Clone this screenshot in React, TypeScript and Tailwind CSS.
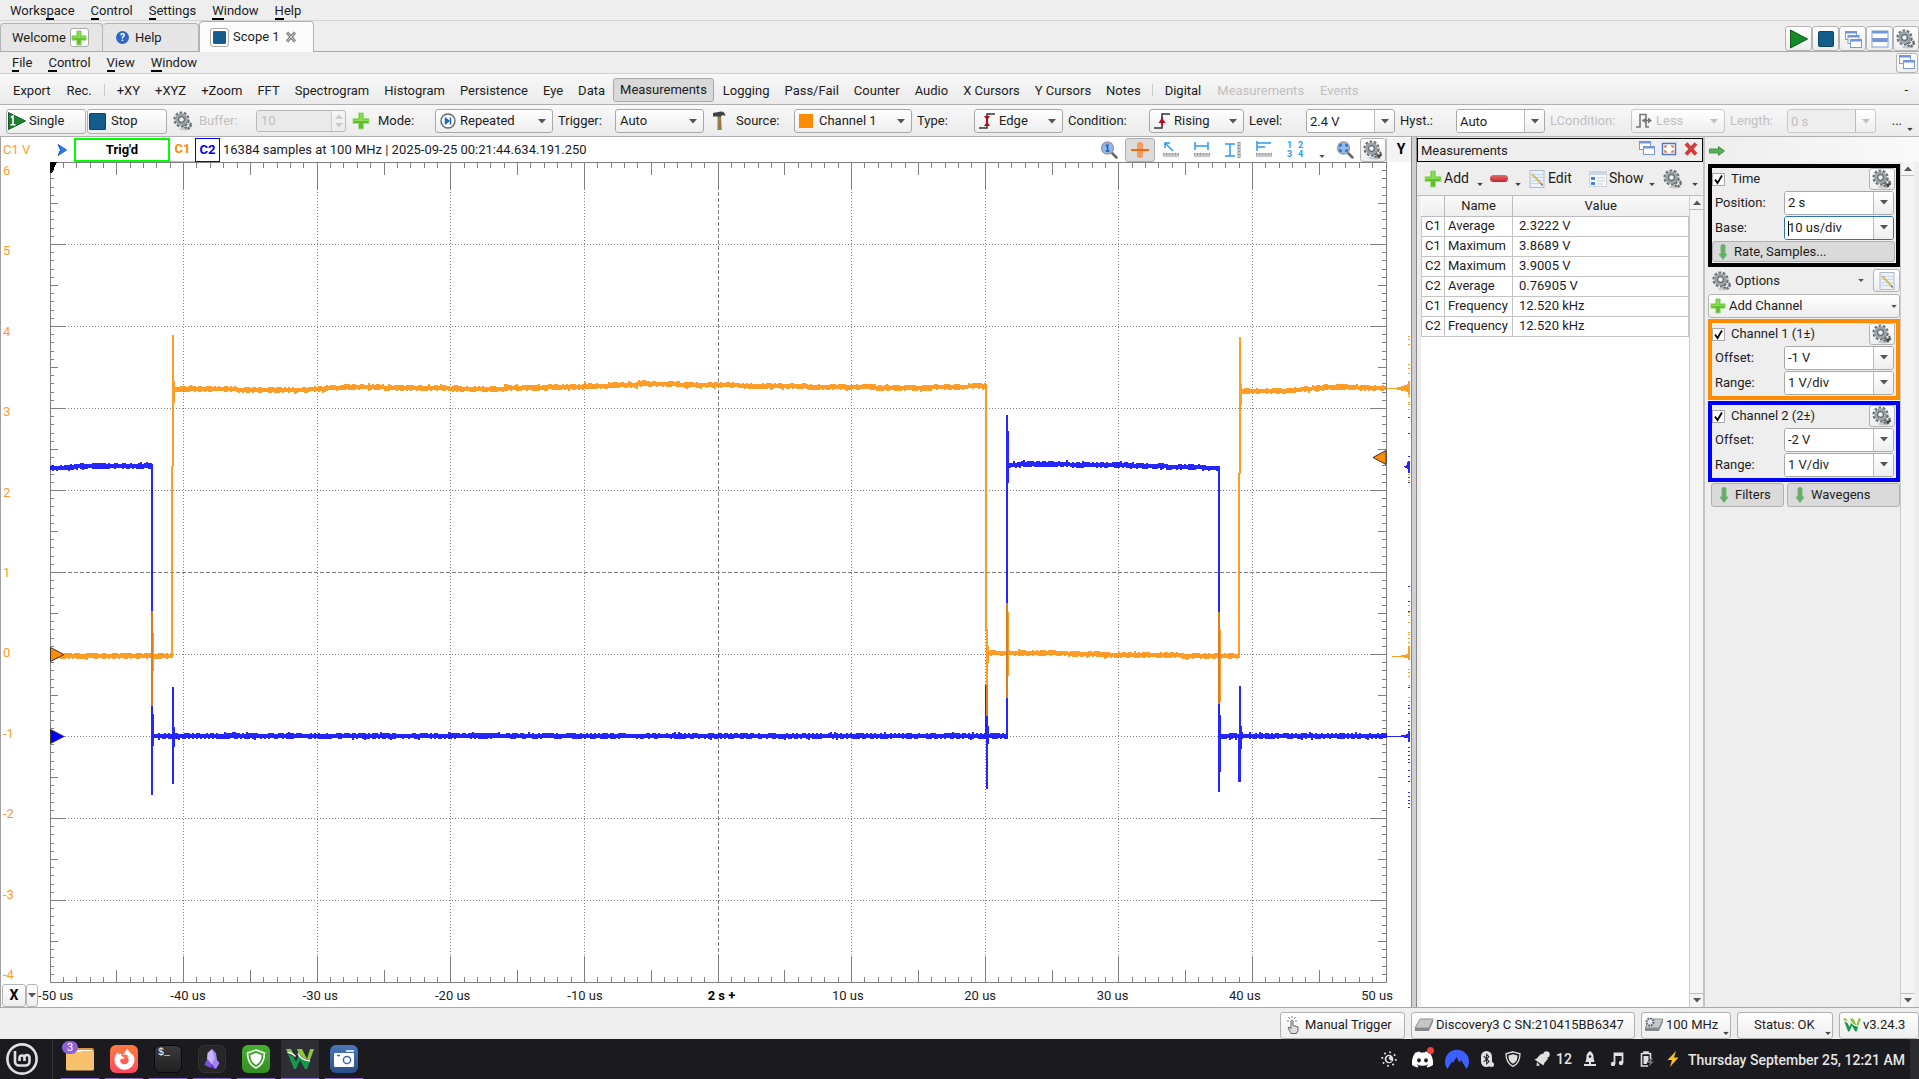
import { useState } from "react";
import type { ReactNode } from "react";
import { FaDiscord, FaFirefoxBrowser, FaBluetoothB } from "react-icons/fa";

const BLUE = "#0000ff";
const ORANGE = "#ff8c00";

/* ---------- icons ---------- */

function Plus({ className = "w-[18px] h-[18px]" }: { className?: string }) {
  return (
    <svg viewBox="0 0 18 18" className={`shrink-0 ${className}`}>
      <path d="M6.5 1h5v5.5H17v5h-5.500V17h-5v-5.500H1v-5h5.500z" fill="#5fbf2c" stroke="#a5dd86" strokeWidth="1" />
      <path d="M7.500 2h3v5.500H16v1.500H2V7.500h5.500z" fill="#8ade55" />
    </svg>
  );
}

function Gear({ caret = false }: { caret?: boolean }) {
  return (
    <svg viewBox="0 0 20 20" className="w-5 h-5 shrink-0">
      <ellipse cx="12" cy="18" rx="6" ry="1.500" fill="#c4c8ca" />
      <circle cx="14.500" cy="14" r="3.200" fill="none" stroke="#5f676c" strokeWidth="2.400" strokeDasharray="2 .9" />
      <circle cx="8.500" cy="8.500" r="6.900" fill="none" stroke="#6a747a" strokeWidth="2.400" strokeDasharray="2.700 1.630" />
      <circle cx="8.500" cy="8.500" r="4.700" fill="#eef0f1" stroke="#9aa3a8" strokeWidth="3" />
      <circle cx="8.500" cy="8.500" r="2.900" fill="#eef0f1" stroke="#5c656b" strokeWidth="1.200" />
      {caret && <path d="M12.500 14.500h7l-3.500 3.500z" fill="#444" />}
    </svg>
  );
}

function Caret({ className = "" }: { className?: string }) {
  return (
    <svg viewBox="0 0 8 5" className={`w-2 h-[5px] shrink-0 ${className}`}>
      <path d="M0 0h8L4 4.500z" fill="currentColor" />
    </svg>
  );
}

function PlayIcon() {
  return (
    <svg viewBox="0 0 20 20" className="w-5 h-5">
      <path d="M1.500 1L18.500 10 1.500 19z" fill="#158a28" stroke="#0d5c1a" />
    </svg>
  );
}

function SingleIcon() {
  return (
    <svg viewBox="0 0 18 18" className="w-[18px] h-[18px] shrink-0">
      <path d="M.5.5L17.500 9 .5 17.500z" fill="#1c8030" stroke="#145c22" />
      <path d="M3 5.500L5 4v8.500M2.500 12.800h5" fill="none" stroke="#fff" strokeWidth="1.600" />
    </svg>
  );
}

function StopIcon({ className = "w-4 h-4" }: { className?: string }) {
  return (
    <svg viewBox="0 0 16 16" className={`shrink-0 ${className}`}>
      <rect x=".5" y=".5" width="15" height="15" rx="1" fill="#145c8c" stroke="#0d4468" />
    </svg>
  );
}

function WindowsIcon({ count = 2 }: { count?: number }) {
  const step = count === 3 ? 4 : 5;
  return (
    <svg viewBox="0 0 18 18" className="w-[18px] h-[18px] shrink-0">
      {Array.from({ length: count }, (_, i) => (
        <g key={i} transform={`translate(${i * (count === 3 ? 2.500 : 4)} ${i * step})`}>
          <rect x="1.500" y="1.500" width="11" height="8" fill="#fff" stroke="#7d9cd0" />
          <rect x="1.500" y="1.500" width="11" height="2" fill="#6d95dc" />
        </g>
      ))}
    </svg>
  );
}

function TileIcon() {
  return (
    <svg viewBox="0 0 18 18" className="w-[18px] h-[18px]">
      {[0, 8.500].map((y) => (
        <g key={y} transform={`translate(0 ${y})`}>
          <rect x="1" y="1" width="16" height="7.500" fill="#fff" stroke="#7d9cd0" />
          <rect x="1.500" y="1" width="15" height="2.500" fill="#6d95dc" />
        </g>
      ))}
    </svg>
  );
}

function Magnifier({ fit = false }: { fit?: boolean }) {
  return (
    <svg viewBox="0 0 18 18" className="w-[18px] h-[18px]">
      <path d="M11 11l5.500 5.500" stroke="#666" strokeWidth="2.500" strokeLinecap="round" />
      <circle cx="7.500" cy="7" r="6" fill="#8db8ee" stroke="#9aa0a6" strokeWidth="1.500" />
      {fit ? (
        <path d="M4 6V4h2M9 4h2v2M11 8v2H9M6 10H4V8" fill="none" stroke="#2a66c8" strokeWidth="1.500" />
      ) : (
        <path d="M5.800 5.200L7.600 4v6M5.800 10h3.600" fill="none" stroke="#2458b0" strokeWidth="1.500" />
      )}
    </svg>
  );
}

function EditIcon() {
  return (
    <svg viewBox="0 0 16 18" className="w-4 h-[18px] shrink-0">
      <rect x="1" y=".5" width="14" height="17" fill="#e8f1fb" stroke="#b4bcc6" />
      <path d="M2 4.500h12M2 7.500h12M2 10.500h12M2 13.500h12" stroke="#c6d8ec" />
      <path d="M3 4l9 9.500" stroke="#d9bb58" strokeWidth="2" />
      <path d="M12 13.500l1.500 2" stroke="#444" strokeWidth="1.200" />
    </svg>
  );
}

function ListIcon() {
  return (
    <svg viewBox="0 0 18 18" className="w-[18px] h-[18px] shrink-0">
      <rect x=".5" y="1.500" width="17" height="15" fill="#f8f8f8" stroke="#ccd2d8" />
      <rect x="1" y="2" width="16" height="3" fill="#c9d8ee" />
      <path d="M2 8.500h4M2 13.500h4" stroke="#3c86dc" strokeWidth="3" />
      <path d="M8 8h8M8 11h8M8 14h6" stroke="#c8ced4" />
    </svg>
  );
}

function DownArrow() {
  return (
    <svg viewBox="0 0 10 16" className="w-[10px] h-4 shrink-0">
      <path d="M3 1.500c0-1.300 4-1.300 4 0v8.500h2L5 15.500 1 10h2z" fill="#5cb35c" stroke="#7fae7f" />
    </svg>
  );
}

function HammerIcon() {
  return (
    <svg viewBox="0 0 14 20" className="w-[14px] h-5">
      <path d="M5.500 5h3.500l.8 14H5.500z" fill="#9a7b46" />
      <path d="M1 2l8-1.500c3 0 4 2 4.500 4.500C12 4 10 4 9 5.500H5L1 5.500z" fill="#3e4444" />
    </svg>
  );
}

function EdgeIcon({ both = false }: { both?: boolean }) {
  return (
    <svg viewBox="0 0 16 16" className="w-4 h-4">
      <path d="M0 15h8V1h8" fill="none" stroke="#333" strokeWidth="1.500" />
      <path d="M8 4v8" stroke="#b01020" strokeWidth="2" />
      <path d={both ? "M5 3h6L8 7.500zM5 13h6L8 8.500z" : "M4.500 10h7L8 4.500z"} fill="#b01020" />
    </svg>
  );
}

function LessIcon() {
  return (
    <svg viewBox="0 0 16 16" className="w-4 h-4">
      <path d="M0 14h4V1.500h6V14h3M6 7.500h9" fill="none" stroke="#777" strokeWidth="1.600" />
      <path d="M6 7.500l4-3v6zM16 7.500l-4-3v6z" fill="#777" />
    </svg>
  );
}

function RepeatIcon() {
  return (
    <svg viewBox="0 0 16 16" className="w-4 h-4">
      <circle cx="8" cy="8" r="7" fill="#fff" stroke="#5d6a74" strokeWidth="1.400" />
      <path d="M5.500 4.500v7M10.500 4.500v7" stroke="#2266b4" strokeWidth="1.500" />
      <path d="M6 4.800L10 8l-4 3.200z" fill="#2266b4" />
    </svg>
  );
}

function Logo({ className }: { className: string }) {
  return (
    <svg viewBox="0 0 28 22" className={className}>
      <path d="M2 6l6 15h2l4-9 5 9h2l3-8c-5 0-9-3-11-6l-3 7-3-6z" fill="#12994a" />
      <path d="M0 1h5l3 6-6-2zM11 1h5l5 10 3-10h4l-4 11c-6 0-10-4-12-8z" fill="#8cc63f" />
      <path d="M1.500 4.500c4 0 6 2 8 4M12 5.500c2 5 7 7 12 7.500" fill="none" stroke="#fff" strokeWidth="1.500" />
    </svg>
  );
}

/* ---------- small controls ---------- */

function IconButton({ label, children, className = "" }: { label: string; children: ReactNode; className?: string }) {
  return (
    <button aria-label={label} className={`flex items-center justify-center border border-[#b4b4b4] rounded-[3px] bg-gradient-to-b from-white to-[#eeeeee] ${className}`}>
      {children}
    </button>
  );
}

type PickProps = {
  id: string;
  label: string;
  value: string;
  labelWidth: string;
  width: string;
  icon?: ReactNode;
  disabled?: boolean;
};

function Pick({ id, label, value, labelWidth, width, icon, disabled }: PickProps) {
  return (
    <>
      <label htmlFor={id} className={`shrink-0 whitespace-nowrap ${labelWidth} ${disabled ? "text-[#c0c0c0]" : ""}`}>{label}</label>
      <div className={`relative shrink-0 h-6 ${width} ${disabled ? "text-[#c0c0c0]" : ""}`}>
        <select
          id={id}
          disabled={disabled}
          className={`appearance-none w-full h-full border rounded-[3px] bg-gradient-to-b from-white to-[#eeeeee] ${icon ? "pl-6" : "pl-1"} ${disabled ? "border-[#c8c8c8]" : "border-[#a8a8a8]"}`}
        >
          <option>{value}</option>
        </select>
        {icon && <span className="absolute left-[5px] top-1 pointer-events-none">{icon}</span>}
        <Caret className={`absolute right-[7px] top-[10px] pointer-events-none ${disabled ? "" : "text-[#555]"}`} />
      </div>
    </>
  );
}

function Combo({ id, label, value, labelWidth, width, disabled, focused }: PickProps & { focused?: boolean }) {
  const [text, setText] = useState(value);
  return (
    <>
      <label htmlFor={id} className={`shrink-0 whitespace-nowrap ${labelWidth} ${disabled ? "text-[#c0c0c0]" : ""}`}>{label}</label>
      <div className={`shrink-0 flex h-6 border rounded-[3px] overflow-hidden ${width} ${focused ? "border-[#2a76a8]" : disabled ? "border-[#c8c8c8]" : "border-[#a8a8a8]"}`}>
        <div className="relative flex-1 min-w-0">
          <input
            id={id}
            value={text}
            disabled={disabled}
            onChange={(e) => setText(e.target.value)}
            className={`w-full h-full pl-[3px] outline-none ${disabled ? "bg-[#eeeeee] text-[#c0c0c0]" : "bg-white"}`}
          />
          {focused && <span className="absolute left-[3px] top-1 w-px h-[15px] bg-black" />}
        </div>
        <button aria-label={`${label} list`} disabled={disabled} className={`w-5 flex items-center justify-center border-l border-[#bbb] bg-gradient-to-b from-white to-[#eeeeee] ${disabled ? "text-[#c0c0c0]" : "text-[#555]"}`}>
          <Caret />
        </button>
      </div>
    </>
  );
}

function Menu({ items }: { items: [string, number][] }) {
  return (
    <>
      {items.map(([name, at]) => (
        <button key={name} className="px-2 pt-px leading-4">
          {name.slice(0, at)}
          <span className="border-b-2 border-black">{name[at]}</span>
          {name.slice(at + 1)}
        </button>
      ))}
    </>
  );
}

/* ---------- plot ---------- */

// ragged band that follows a baseline, one column every two pixels
function band(points: [number, number][], seed: number) {
  let s = seed;
  const rnd = () => {
    s = (s * 16807) % 2147483647;
    return s / 2147483647;
  };
  let d = "";
  for (let i = 0; i < points.length - 1; i++) {
    const [x0, y0] = points[i];
    const [x1, y1] = points[i + 1];
    for (let x = x0; x < x1; x += 2) {
      const y = y0 + ((y1 - y0) * (x - x0)) / (x1 - x0);
      const top = Math.round(y - 2 - (rnd() > 0.5 ? 1 : 0) - (rnd() > 0.93 ? 1 : 0));
      const bottom = Math.round(y + 2 + (rnd() > 0.5 ? 1 : 0) + (rnd() > 0.93 ? 1 : 0));
      d += `M${x} ${top}h2V${bottom}h-2z`;
    }
  }
  return d;
}

function bars(list: [number, number, number, number][]) {
  return list.map(([x, w, y0, y1]) => `M${x} ${y0}h${w}V${y1}h-${w}z`).join("");
}

const blueTrace =
  band([[0, 306], [14, 306], [32, 304], [102, 304]], 11) +
  band([[104, 574], [500, 574], [936, 574]], 23) +
  band([[938, 574], [957, 574]], 31) +
  band([[959, 303], [980, 302], [1060, 303], [1169, 306]], 47) +
  band([[1171, 574], [1336, 574]], 59) +
  bars([
    [101, 2, 302, 633], [103, 1, 552, 584], [122, 2, 525, 622], [124, 1, 565, 585],
    [935, 1, 523, 574], [936, 2, 523, 627], [938, 1, 564, 582],
    [956, 2, 253, 575], [958, 1, 269, 321], [1168, 2, 304, 630], [1170, 1, 553, 610],
    [1188, 1, 574, 620], [1189, 2, 524, 620], [1191, 1, 564, 587],
  ]);

const orangeTrace =
  band([[0, 494], [121, 494]], 71) +
  band([[124, 227], [250, 228], [300, 225], [430, 227], [520, 225], [600, 222], [720, 224], [860, 226], [936, 224]], 83) +
  band([[938, 491], [1000, 491], [1070, 493], [1188, 494]], 97) +
  band([[1192, 229], [1230, 229], [1280, 225], [1336, 226]], 103) +
  bars([
    [101, 2, 449, 544], [103, 1, 471, 509], [121, 2, 304, 496], [122, 2, 173, 304], [124, 1, 219, 241],
    [935, 2, 222, 468], [936, 2, 467, 554], [938, 1, 484, 501],
    [956, 2, 441, 536], [958, 1, 450, 514], [1168, 2, 450, 542], [1170, 1, 468, 540],
    [1188, 2, 311, 496], [1189, 2, 175, 312], [1191, 1, 222, 243],
  ]);

const orangeMarks = [174, 177, 182, 202, 206, 211, 234, 240, 242, 247, 312, 318, 443, 450, 453, 460, 470, 472, 476, 480, 484, 507, 510, 514, 523, 535, 539, 545];
const blueMarks = [255, 271, 294, 315, 320, 424, 439, 449, 525, 543, 546, 551, 559, 563, 567, 585, 589, 593, 597, 600, 608, 614, 619, 630, 634, 638, 641, 645];

function Plot() {
  const ticks: string[] = [];
  for (let i = 1; i < 100; i++) {
    const x = Math.floor(i * 13.36) + 0.5;
    const len = i % 10 === 0 ? 27 : i % 5 === 0 ? 13 : 6;
    ticks.push(`M${x} 0v${len}M${x} 821v-${len}`);
    const y = Math.round(i * 8.200) + 0.5;
    const w = i % 10 === 0 ? 16 : i % 5 === 0 ? 8 : 4;
    ticks.push(`M0 ${y}h${w}M1336 ${y}h-${w}`);
  }
  return (
    <svg viewBox="0 0 1361 821" preserveAspectRatio="none" className="flex-1 min-w-0 h-full" shapeRendering="crispEdges">
      <g stroke="#808080" fill="none">
        {[1, 2, 3, 4, 5, 6, 7, 8, 9].map((i) => (
          <g key={i} strokeDasharray={i === 5 ? "4 2" : "1 2"}>
            <path d={`M${Math.floor(i * 133.600) + 0.5} 0V821`} />
            <path d={`M0 ${i * 82 + 0.5}H1336`} />
          </g>
        ))}
        <path d={ticks.join("")} />
        <path d="M.5 .5H1336.500V820.500H.5z" />
      </g>
      <path d={blueTrace} fill={BLUE} opacity=".85" />
      <path d={orangeTrace} fill={ORANGE} opacity=".85" />
      <g fill={ORANGE} opacity=".85">
        <path d="M1337 226h8l8-2 5-2v-3h2v14h-2v-3l-5-1-8-2h-8zM1342 494h7l9-2v-8h2v14h-2v-2l-9-1h-7z" />
        <path d={orangeMarks.map((y) => `M1358 ${y}h2v1h-2z`).join("")} />
      </g>
      <g fill={BLUE} opacity=".85">
        <path d="M1337 574h12l9-2v-3h2v11h-2v-4l-9-1h-12zM1354 304h2l2-5h2v12h-2v-4l-4-2z" />
        <path d={blueMarks.map((y) => `M1358 ${y}h2v1h-2z`).join("")} />
      </g>
      <g stroke="#333" shapeRendering="auto">
        <path d="M.5 485.500L14 492.500.5 499.500z" fill={ORANGE} />
        <path d="M.5 567.500L14 574.500.5 581.500z" fill={BLUE} />
        <path d="M1336 288.500L1323 295.500 1336 302.500z" fill={ORANGE} />
      </g>
      <path d="M0 0h7L2 11H0z" fill="#000" />
    </svg>
  );
}

function RulerIcon({ d, side = false }: { d: string; side?: boolean }) {
  return (
    <svg viewBox="0 0 18 18" className="w-[18px] h-[18px]">
      {side ? (
        <>
          <rect x="13" y="1" width="4" height="16" fill="#c8c8cc" />
          <path d="M15 1v16" stroke="#909096" strokeWidth="2" strokeDasharray="1 2" />
        </>
      ) : (
        <>
          <rect x="1" y="12" width="16" height="4" fill="#c8c8cc" />
          <path d="M1 13h16" stroke="#909096" strokeWidth="2" strokeDasharray="1 2" />
        </>
      )}
      <path d={d} fill="none" stroke="#2a9bf5" strokeWidth="1.500" />
    </svg>
  );
}

const timeLabels = ["-50 us", "-40 us", "-30 us", "-20 us", "-10 us", "2 s +", "10 us", "20 us", "30 us", "40 us", "50 us"];

function ScopeView() {
  return (
    <section className="flex-1 min-w-0 flex flex-col bg-white border-l border-[#a0a0a0]">
      <div className="flex items-center h-[25px] pl-[2px]">
        <span className="w-[54px] text-[#ff9c24]">C1 V</span>
        <svg viewBox="0 0 10 12" className="w-[10px] h-3 mr-[7px]">
          <path d="M1 .5L9.500 6 1 11.500 3.500 6z" fill="#2a7df0" stroke="#1b5fc4" />
        </svg>
        <button className="w-[96px] h-6 border-2 border-[#00ff00] bg-white text-black font-bold">Trig'd</button>
        <button className="w-[25px] h-6 font-bold text-[#ff8c00] border-b border-[#bbb]">C1</button>
        <button className="w-[25px] h-6 font-bold text-[#0000ff] border border-[#0000ff]">C2</button>
        <span className="ml-[3px] pt-px whitespace-nowrap">16384 samples at 100 MHz | 2025-09-25 00:21:44.634.191.250</span>
        <div className="ml-auto flex items-center">
          <button aria-label="Zoom 1:1" className="mr-[7px]"><Magnifier /></button>
          <button aria-label="Crosshair" className="w-[30px] h-6 flex items-center justify-center rounded-[3px] border border-[#adadad] bg-[#dcdcdc] mr-[7px]">
            <svg viewBox="0 0 18 18" className="w-[18px] h-[18px]">
              <rect x="6" y="1" width="6" height="16" rx="2.500" fill="#f59b5c" />
              <path d="M0 9h18" stroke="#f06a10" strokeWidth="2" />
            </svg>
          </button>
          <div className="flex gap-[13px]">
            <button aria-label="Pointer"><RulerIcon d="M11 10L3 2M3 7V2h5" /></button>
            <button aria-label="Horizontal cursors"><RulerIcon d="M2 1v8M15 1v8M2 5h13" /></button>
            <button aria-label="Vertical cursors"><RulerIcon side d="M1 3h10M1 15h10M6 3v12" /></button>
            <button aria-label="Level cursors"><RulerIcon d="M2 0v10M2 2h14M2 6h8" /></button>
            <button aria-label="Layout" className="grid grid-cols-2 gap-x-1 w-[18px] text-[9px] leading-[9px] font-bold text-[#2a9bf5]">
              <span>1</span><span>2</span><span>3</span><span>4</span>
            </button>
          </div>
          <Caret className="ml-[14px] mt-[14px] scale-75 text-[#555]" />
          <button aria-label="Zoom fit" className="ml-[10px] mr-[6px]"><Magnifier fit /></button>
          <IconButton label="View options" className="w-[26px] h-6"><Gear caret /></IconButton>
          <button className="w-[25px] h-6 pl-1 font-bold text-[14px] text-black border-l border-[#bbb] bg-[#f4f4f4]">Y</button>
        </div>
      </div>
      <div className="flex flex-1 min-h-0">
        <div className="w-[49px] pl-[2px] pt-px flex flex-col justify-between leading-4 text-[#ff9c24]">
          {[6, 5, 4, 3, 2, 1, 0, -1, -2, -3, -4].map((v) => (
            <span key={v}>{v}</span>
          ))}
        </div>
        <Plot />
      </div>
      <div className="flex items-center h-6 pl-px pr-[18px]">
        <IconButton label="X axis" className="w-6 h-[23px] font-bold text-[14px] text-black">X</IconButton>
        <IconButton label="X axis menu" className="w-3 h-[23px] text-[#555]"><Caret /></IconButton>
        <div className="flex-1 flex pt-px whitespace-nowrap">
          {timeLabels.map((t, i) => (
            <div key={t} className={i === 10 ? "" : "flex-1 min-w-0"}>
              <span className={i === 5 ? "ml-2 font-bold text-black" : ""}>{t}</span>
            </div>
          ))}
        </div>
      </div>
    </section>
  );
}

/* ---------- measurements ---------- */

const measurements = [
  ["C1", "Average", "2.3222 V"],
  ["C1", "Maximum", "3.8689 V"],
  ["C2", "Maximum", "3.9005 V"],
  ["C2", "Average", "0.76905 V"],
  ["C1", "Frequency", "12.520 kHz"],
  ["C2", "Frequency", "12.520 kHz"],
];

function ScrollBar() {
  return (
    <div className="w-[14px] shrink-0 flex flex-col justify-between bg-[#f4f4f4] border-l border-[#ccc] text-[#555]">
      <span className="h-[14px] flex items-center justify-center border-b border-[#bbb]"><Caret className="rotate-180" /></span>
      <span className="h-[14px] flex items-center justify-center border-t border-[#bbb]"><Caret /></span>
    </div>
  );
}

function Measurements() {
  return (
    <section className="w-[286px] shrink-0 flex flex-col">
      <header className="flex items-center h-6 mt-px pl-[3px] pr-[2px] border border-black">
        <h2 className="flex-1 pt-px">Measurements</h2>
        <div className="flex items-center gap-1 mb-[2px]">
          <button aria-label="Detach"><WindowsIcon /></button>
          <button aria-label="Maximize">
            <svg viewBox="0 0 18 18" className="w-[18px] h-[18px]">
              <rect x="2.500" y="3.500" width="13" height="11" fill="#fff" stroke="#4a78cc" strokeWidth="1.500" />
              <path d="M5 8V6h2M11 6h2v2M13 10v2h-2M7 12H5v-2" fill="none" stroke="#f07838" strokeWidth="1.500" />
            </svg>
          </button>
          <button aria-label="Close">
            <svg viewBox="0 0 18 18" className="w-[18px] h-[18px]">
              <path d="M4 3.500l10 11M14 3.500l-10 11" stroke="#d33c3c" strokeWidth="4" />
            </svg>
          </button>
        </div>
      </header>
      <div className="flex items-center h-[33px] pl-[7px] text-[14px]">
        <button className="flex items-center gap-[2px] w-[52px]"><Plus />Add</button>
        <Caret className="mt-3 scale-75 text-[#444]" />
        <button aria-label="Remove" className="w-[30px] h-5 flex items-center justify-center">
          <span className="w-[18px] h-[7px] rounded-sm bg-gradient-to-b from-[#e46a6a] to-[#c41f26]" />
        </button>
        <Caret className="mt-3 scale-75 text-[#444]" />
        <button className="ml-[7px] flex items-center gap-[3px] w-[60px]"><EditIcon />Edit</button>
        <button className="flex items-center gap-[2px] w-[59px]"><ListIcon />Show</button>
        <Caret className="mt-3 scale-75 text-[#444]" />
        <button aria-label="Settings" className="ml-[7px]"><Gear /></button>
        <Caret className="mt-3 ml-2 scale-75 text-[#444]" />
      </div>
      <div className="flex-1 flex bg-white border-t border-[#bbb]">
        <div className="flex-1 border-l-4 border-[#eeeeee]">
          <table className="w-full border-collapse table-fixed leading-4">
            <thead>
              <tr className="h-5 bg-gradient-to-b from-[#fafafa] to-[#eeeeee]">
                <th className="w-[23px] border-b border-r border-[#bbb]" />
                <th className="w-[68px] font-normal border-b border-r border-[#bbb]">Name</th>
                <th className="font-normal border-b border-[#bbb]">Value</th>
              </tr>
            </thead>
            <tbody>
              {measurements.map(([ch, name, value]) => (
                <tr key={ch + name} className="h-5">
                  <td className="border border-[#c4c4c4] pl-[3px]">{ch}</td>
                  <td className="border border-[#c4c4c4] pl-[3px]">{name}</td>
                  <td className="border border-[#c4c4c4] pl-[6px]">{value}</td>
                </tr>
              ))}
            </tbody>
          </table>
        </div>
        <ScrollBar />
      </div>
    </section>
  );
}

/* ---------- side panel ---------- */

function CheckRow({ id, label }: { id: string; label: string }) {
  const [on, setOn] = useState(true);
  return (
    <div className="flex items-center h-[22px]">
      <span className="relative w-[13px] h-[13px]">
        <input id={id} type="checkbox" checked={on} onChange={() => setOn(!on)} className="appearance-none block w-[13px] h-[13px] bg-white border border-[#aaa]" />
        {on && (
          <svg viewBox="0 0 13 13" className="absolute left-0 top-0 w-[13px] h-[13px] pointer-events-none">
            <path d="M3 6.500l2.500 3.500L10 2.500" fill="none" stroke="#000" strokeWidth="1.800" />
          </svg>
        )}
      </span>
      <label htmlFor={id} className="ml-[6px] flex-1">{label}</label>
      <IconButton label={`${label} options`} className="w-[26px] h-[22px]"><Gear caret /></IconButton>
    </div>
  );
}

function Channel({ n, offset, frame }: { n: number; offset: string; frame: string }) {
  return (
    <div className={`border-4 pr-px mt-px h-[81px] flex flex-col ${frame}`}>
      <CheckRow id={`ch${n}`} label={`Channel ${n} (${n}±)`} />
      <div className="flex items-center h-[25px] pl-[3px]">
        <Combo id={`offset${n}`} label="Offset:" value={offset} labelWidth="w-[69px]" width="w-[110px]" />
      </div>
      <div className="flex items-center h-[25px] pl-[3px]">
        <Combo id={`range${n}`} label="Range:" value="1 V/div" labelWidth="w-[69px]" width="w-[110px]" />
      </div>
    </div>
  );
}

function SidePanel() {
  return (
    <aside className="w-[216px] shrink-0 flex flex-col border-l-2 border-[#c4c4c4] bg-[#eeeeee]">
      <div className="h-[25px] flex items-center pl-1 pt-[2px] bg-gradient-to-r from-[#eeeeee] to-[#fafafa]">
        <svg viewBox="0 0 16 10" className="w-4 h-[10px]">
          <path d="M.5 3h9V.5L15.500 5 9.500 9.500V7h-9z" fill="#55b055" stroke="#4a934a" />
        </svg>
      </div>
      <div className="flex-1 flex">
        <div className="flex-1 pl-[3px] pt-[2px]">
          <div className="border-4 border-black pr-px h-[103px]">
            <CheckRow id="time" label="Time" />
            <div className="flex items-center h-[25px] pl-[3px]">
              <Combo id="position" label="Position:" value="2 s" labelWidth="w-[69px]" width="w-[110px]" />
            </div>
            <div className="flex items-center h-[25px] pl-[3px]">
              <Combo id="base" label="Base:" value="10 us/div" labelWidth="w-[69px]" width="w-[110px]" focused />
            </div>
            <button className="w-full h-[21px] mt-px flex items-center gap-[6px] pl-[5px] border border-[#b0b0b0] rounded-[3px] bg-[#dadada]">
              <DownArrow />Rate, Samples...
            </button>
          </div>
          <div className="flex items-center h-[27px] pl-1">
            <Gear />
            <button className="flex-1 text-left pl-[3px]">Options</button>
            <Caret className="mr-2 scale-75 text-[#555]" />
            <IconButton label="Edit options" className="w-[27px] h-[23px]"><EditIcon /></IconButton>
          </div>
          <button className="w-full h-6 flex items-center gap-[3px] px-px border border-[#b4b4b4] rounded-[3px] bg-gradient-to-b from-white to-[#eeeeee]">
            <Plus className="w-4 h-4" />Add Channel
            <Caret className="ml-auto scale-75 text-[#555]" />
          </button>
          <Channel n={1} offset="-1 V" frame="border-[#ff8c00]" />
          <Channel n={2} offset="-2 V" frame="border-[#0000ff]" />
          <div className="flex gap-[3px] mt-px pl-[3px]">
            <button className="w-[73px] h-6 flex items-center gap-[6px] pl-[7px] border border-[#b0b0b0] rounded-[3px] bg-[#dadada]"><DownArrow />Filters</button>
            <button className="flex-1 h-6 flex items-center gap-[6px] pl-[7px] border border-[#b0b0b0] rounded-[3px] bg-[#dadada]"><DownArrow />Wavegens</button>
          </div>
        </div>
        <ScrollBar />
        <div className="w-[5px]" />
      </div>
    </aside>
  );
}

/* ---------- bars ---------- */

function TabBar() {
  return (
    <div className="flex items-end h-[31px] border-b border-[#aaa]">
      <button className="h-[28px] w-[103px] pl-[11px] flex items-center gap-1 border border-b-0 border-[#b4b4b4] bg-[#e6e6e6] rounded-t-sm">
        Welcome
        <span className="w-[19px] h-[19px] flex items-center justify-center border border-[#aaa] rounded-[3px] bg-white"><Plus className="w-4 h-4" /></span>
      </button>
      <button className="h-[28px] w-[96px] pl-[13px] flex items-center gap-[6px] border border-b-0 border-l-0 border-[#b4b4b4] bg-[#e6e6e6] rounded-t-sm">
        <span className="w-[13px] h-[13px] rounded-full bg-[#2b68c8] text-white text-[10px] leading-[13px] font-bold">?</span>
        Help
      </button>
      <div className="h-[31px] w-[115px] -mb-px pl-[10px] flex items-center border border-b-0 border-[#b4b4b4] bg-[#fcfcfc] rounded-t-sm">
        <span className="w-[19px] h-[19px] flex items-center justify-center border border-[#aaa] rounded-[3px] bg-white mr-1"><StopIcon className="w-[13px] h-[13px]" /></span>
        <button>Scope 1</button>
        <button aria-label="Close Scope 1" className="ml-[5px]">
          <svg viewBox="0 0 12 12" className="w-3 h-3">
            <path d="M2 1.500l8 9M10 1.500l-8 9" stroke="#777" strokeWidth="3" />
            <path d="M2 1.500l8 9M10 1.500l-8 9" stroke="#ddd" strokeWidth="1" />
          </svg>
        </button>
      </div>
      <div className="ml-auto flex">
        <IconButton label="Run all" className="w-[27px] h-[25px]"><PlayIcon /></IconButton>
        <IconButton label="Stop all" className="w-[27px] h-[25px]"><StopIcon /></IconButton>
        <IconButton label="Cascade" className="w-[27px] h-[25px]"><WindowsIcon count={3} /></IconButton>
        <IconButton label="Tile" className="w-[27px] h-[25px]"><TileIcon /></IconButton>
        <IconButton label="Workspace settings" className="w-[26px] h-[25px]"><Gear /></IconButton>
      </div>
    </div>
  );
}

const views = ["+XY", "+XYZ", "+Zoom", "FFT", "Spectrogram", "Histogram", "Persistence", "Eye", "Data", "Measurements", "Logging", "Pass/Fail", "Counter", "Audio", "X Cursors", "Y Cursors", "Notes"];

function ViewBar() {
  return (
    <div className="flex items-center h-[31px] pl-[5px] pr-[11px] pt-px border-b border-[#b0b0b0] bg-gradient-to-b from-[#f8f8f8] to-[#ebebeb] whitespace-nowrap">
      <button className="px-2 pt-[2px]">Export</button>
      <button className="px-2 pt-[2px]">Rec.</button>
      <span className="w-px h-3 mx-1 bg-[#ccc]" />
      {views.map((v) => (
        <button key={v} className={v === "Measurements" ? "px-[6px] mx-px h-6 border border-[#a8a8a8] rounded-[3px] bg-[#d9d9d9]" : "pl-2 pr-[7px] pt-[2px]"}>
          {v}
        </button>
      ))}
      <span className="w-px h-3 mx-1 bg-[#ccc]" />
      <button className="px-2 pt-[2px]">Digital</button>
      <button disabled className="px-2 pt-[2px] text-[#c0c0c0]">Measurements</button>
      <button disabled className="px-2 pt-[2px] text-[#c0c0c0]">Events</button>
      <span className="ml-auto">-</span>
    </div>
  );
}

function TriggerBar() {
  return (
    <div className="flex items-center h-8 pl-[6px] pt-px border-b border-[#b0b0b0] bg-gradient-to-b from-[#f8f8f8] to-[#ebebeb]">
      <button className="w-[80px] h-[25px] flex items-center gap-[3px] pl-px mr-px border border-[#b0b0b0] rounded-[3px] bg-gradient-to-b from-white to-[#eeeeee]"><SingleIcon />Single</button>
      <button className="w-[80px] h-[25px] flex items-center gap-[5px] pl-px border border-[#b0b0b0] rounded-[3px] bg-gradient-to-b from-white to-[#eeeeee]"><StopIcon className="w-[17px] h-[17px]" />Stop</button>
      <button aria-label="Trigger settings" className="ml-[6px] mr-[6px]"><Gear /></button>
      <label htmlFor="buffer" className="w-[57px] text-[#c0c0c0]">Buffer:</label>
      <div className="flex w-[90px] h-[22px] border border-[#b8b8b8] rounded-[3px] overflow-hidden">
        <input id="buffer" disabled value="10" readOnly className="flex-1 min-w-0 pl-1 bg-[#eaeaea] text-[#c0c0c0]" />
        <div className="w-[14px] flex flex-col items-center justify-center gap-1 border-l border-[#ccc] text-[#ccc]">
          <Caret className="rotate-180" />
          <Caret />
        </div>
      </div>
      <button aria-label="Add buffer" className="ml-[6px] mr-2"><Plus /></button>
      <Pick id="mode" label="Mode:" value="Repeated" labelWidth="w-[57px]" width="w-[118px]" icon={<RepeatIcon />} />
      <Pick id="trigger" label="Trigger:" value="Auto" labelWidth="pl-[5px] w-[62px]" width="w-[89px]" />
      <span className="ml-2 mr-[10px]"><HammerIcon /></span>
      <Pick id="source" label="Source:" value="Channel 1" labelWidth="w-[58px]" width="w-[118px]" icon={<span className="block w-[14px] h-[14px] mt-px bg-[#ff8c00]" />} />
      <Pick id="type" label="Type:" value="Edge" labelWidth="pl-[5px] w-[62px]" width="w-[89px]" icon={<EdgeIcon both />} />
      <Pick id="condition" label="Condition:" value="Rising" labelWidth="pl-[5px] w-[86px]" width="w-[95px]" icon={<EdgeIcon />} />
      <Combo id="level" label="Level:" value="2.4 V" labelWidth="pl-[5px] w-[62px]" width="w-[89px]" />
      <Combo id="hyst" label="Hyst.:" value="Auto" labelWidth="pl-[5px] w-[61px]" width="w-[89px]" />
      <Pick id="lcondition" label="LCondition:" value="Less" labelWidth="pl-[5px] w-[86px]" width="w-[94px]" icon={<LessIcon />} disabled />
      <Combo id="length" label="Length:" value="0 s" labelWidth="pl-[5px] w-[62px]" width="w-[89px]" disabled />
      <button className="ml-auto">...</button>
      <Caret className="mt-4 mr-[5px] ml-1 scale-75 text-[#444]" />
    </div>
  );
}

function Device({ gear = false }: { gear?: boolean }) {
  return (
    <svg viewBox="0 0 20 18" className="w-5 h-[18px] shrink-0">
      <path d="M6 3h13l-4 9H1z" fill="#c4c6c8" stroke="#909498" />
      <path d="M1 12h14l4-9v3l-4 9H1z" fill="#85898c" />
      {gear && <circle cx="6" cy="6" r="3.500" fill="#dfe8f0" stroke="#5f6a74" strokeWidth="2" strokeDasharray="1.800 .9" />}
    </svg>
  );
}

function StatusBar() {
  const base = "h-[27px] flex items-center border border-[#b0b0b0] rounded-[3px] bg-gradient-to-b from-white to-[#eeeeee] whitespace-nowrap";
  return (
    <div className="flex items-center justify-end gap-[6px] h-8 pt-[3px] border-t border-[#aaa] bg-[#eeeeee]">
      <button className={`${base} w-[125px] pl-[5px] gap-[5px]`}>
        <svg viewBox="0 0 14 20" className="w-[14px] h-5 shrink-0">
          <path d="M5 18.500L2 13l1-1 2 1.500V6c0-1 2-1 2 0v4.500l5 1.500v4l-1.500 2.500z" fill="#ddd" stroke="#666" />
          <path d="M6 1v2M2.500 2l1.500 2M9.500 2L8 4M1 6h2M9 6h2" stroke="#777" />
        </svg>
        Manual Trigger
      </button>
      <button className={`${base} w-[224px] pl-[2px] gap-[2px]`}><Device />Discovery3 C SN:210415BB6347</button>
      <button className={`${base} w-[90px] pl-[2px] gap-[2px]`}>
        <Device gear />100 MHz
        <Caret className="ml-auto mt-4 scale-75 text-[#444]" />
      </button>
      <button className={`${base} w-[96px] pl-4`}>
        Status: OK
        <Caret className="ml-auto mt-4 scale-75 text-[#444]" />
      </button>
      <button className={`${base} w-[80px] pl-[3px] gap-[2px]`}><Logo className="w-[18px] h-4" />v3.24.3</button>
    </div>
  );
}

function TaskItem({ label, active, children }: { label: string; active?: boolean; children: ReactNode }) {
  return (
    <button aria-label={label} className={`relative w-[38px] h-[39px] mr-[6px] flex items-center justify-center border-b border-[#9065d8] ${active ? "bg-[#2f2e35]" : ""}`}>
      {children}
    </button>
  );
}

function Taskbar() {
  return (
    <footer className="flex items-center h-10 bg-[#1b1a1f] text-[#e6e6e6]">
      <button aria-label="Menu" className="w-[53px] pl-[6px] h-10 border-r border-[#333]">
        <svg viewBox="0 0 32 32" className="w-8 h-8">
          <circle cx="16" cy="16" r="14.600" fill="none" stroke="#e0e0e0" strokeWidth="2.600" />
          <path d="M9 8v10.500a4 4 0 0 0 4 4h6.500a4 4 0 0 0 4-4V14.500a2.500 2.500 0 0 0-5 0V18M18.500 15a2.500 2.500 0 0 0-5 0v3" fill="none" stroke="#e0e0e0" strokeWidth="2.600" />
        </svg>
      </button>
      <div className="flex ml-2 self-end">
        <TaskItem label="Files">
          <svg viewBox="0 0 28 24" className="w-7 h-6">
            <path d="M0 3a2 2 0 0 1 2-2h24a2 2 0 0 1 2 2v6H0z" fill="#d89a3c" />
            <path d="M2 3h24v4H2z" fill="#fff" />
            <path d="M0 5h14l2-1h12v18a1.500 1.500 0 0 1-1.500 1.500h-25A1.500 1.500 0 0 1 0 22z" fill="#f8c26c" />
          </svg>
          <span className="absolute left-px top-px w-4 h-[13px] rounded-full bg-[#9060d8] text-white text-[11px] leading-[13px]">3</span>
        </TaskItem>
        <TaskItem label="Firefox">
          <span className="w-7 h-7 rounded-md bg-gradient-to-b from-[#ff7a3c] to-[#ff4560] flex items-center justify-center text-white">
            <FaFirefoxBrowser size={21} />
          </span>
        </TaskItem>
        <TaskItem label="Terminal">
          <span className="w-7 h-7 rounded-md border border-[#0a0a0a] bg-gradient-to-b from-[#3a3a3a] to-[#202020] text-left pl-[3px] text-[10px] leading-[13px] text-white font-['Liberation_Mono']">$_</span>
        </TaskItem>
        <TaskItem label="Obsidian">
          <span className="w-7 h-7 rounded-md bg-[#262626] border border-[#333] flex items-center justify-center">
            <svg viewBox="0 0 18 22" className="w-[18px] h-[22px]">
              <path d="M9 1l4 4 1 7 2.500 3-3.500 6-5-2z" fill="#a482f5" />
              <path d="M9 1L4.500 5 4 11l4.500 6 3-7z" fill="#c9b4fa" />
              <path d="M4 11l-2.500 6L8 20l.5-4z" fill="#7c4fe0" />
              <path d="M8.500 16l4 5-5-1.500z" fill="#5a2dc0" />
            </svg>
          </span>
        </TaskItem>
        <TaskItem label="Shield">
          <span className="w-7 h-7 rounded-md bg-gradient-to-b from-[#48b030] to-[#338f20] flex items-center justify-center">
            <svg viewBox="0 0 20 20" className="w-5 h-5">
              <path d="M10 1l8.500 3c0 7-2 12-8.500 15C3.500 16 1.500 11 1.500 4z" fill="none" stroke="#fff" strokeWidth="1.600" />
              <path d="M10 4l5.500 2c0 5-1.500 7.500-5.500 10-4-2.500-5.500-5-5.500-10z" fill="#fff" />
            </svg>
          </span>
        </TaskItem>
        <TaskItem label="WaveForms" active><Logo className="w-7 h-[22px]" /></TaskItem>
        <TaskItem label="Screenshot">
          <span className="w-7 h-7 rounded-md bg-gradient-to-b from-[#4a78b8] to-[#28508a] flex items-center justify-center">
            <svg viewBox="0 0 22 18" className="w-[22px] h-[18px]">
              <path d="M13 1h8" stroke="#fff" strokeWidth="1.500" />
              <rect x="1" y="3" width="20" height="14" rx="1" fill="#fff" />
              <circle cx="14" cy="10" r="3.600" fill="none" stroke="#3a68a8" strokeWidth="1.500" />
              <path d="M4 5.500h3" stroke="#3a68a8" strokeWidth="1.500" />
            </svg>
          </span>
        </TaskItem>
      </div>
      <div className="ml-auto flex items-center">
        <svg viewBox="0 0 16 16" className="w-4 h-4 mr-[14px]">
          <circle cx="8" cy="8" r="6.800" fill="none" stroke="#e0e0e0" strokeWidth="1.800" strokeDasharray="1.800 3.540" />
          <circle cx="8" cy="8" r="4.300" fill="#e0e0e0" />
          <path d="M9 5a3 3 0 1 0 2 4.500A2.500 2.500 0 0 1 9 5z" fill="#1b1a1f" />
        </svg>
        <span className="relative mr-[11px] text-white">
          <FaDiscord size={23} />
          <span className="absolute -top-px right-0 w-[7px] h-[7px] rounded-full bg-[#f04040]" />
        </span>
        <svg viewBox="0 0 24 20" className="w-6 h-5 mr-3">
          <path d="M2.500 20A12 12 0 1 1 21.500 20L16 11l-1.500 2.500L11.500 8 8 14l-1-1.500z" fill="#3e5fff" />
        </svg>
        <span className="relative w-[11px] h-4 mr-[13px] rounded-full bg-[#e0e0e0] text-[#1b1a1f] flex items-center justify-center">
          <FaBluetoothB size={12} />
          <span className="absolute -right-[2px] bottom-0 w-[5px] h-[5px] rounded-full bg-[#e0e0e0]" />
        </span>
        <svg viewBox="0 0 16 16" className="w-4 h-4 mr-[13px]">
          <path d="M8 .8l7 2c0 6-1.500 10-7 12.500C2.500 12.800 1 8.800 1 2.800z" fill="none" stroke="#e0e0e0" strokeWidth="1.300" />
          <path d="M8 3.300l4.500 1.300c0 4-1 6.400-4.500 8.200-3.500-1.800-4.500-4.200-4.500-8.200z" fill="#e0e0e0" />
        </svg>
        <svg viewBox="0 0 16 16" className="w-4 h-4 mr-[6px]">
          <path d="M.5 8.500C4 8 5 3 9 2.500l5 5c-1.500 3-3.500 3-4.500 7z" fill="#e0e0e0" />
          <path d="M3 11l3 3.500-3.500.5z" fill="#e0e0e0" />
          <circle cx="12.500" cy="3.500" r="3.200" fill="#e0e0e0" />
        </svg>
        <span className="pt-px font-medium text-[14px] w-[27px]">12</span>
        <svg viewBox="0 0 14 16" className="w-[14px] h-4 mr-[13px]">
          <path d="M7 0c3 2 4 4 3.500 7l1 4H2.500l1-4C3 4 4 2 7 0zM6 11h2v2h5v2H1v-2h5z" fill="#e0e0e0" />
          <circle cx="7" cy="5.500" r="1.300" fill="#1b1a1f" />
        </svg>
        <svg viewBox="0 0 14 14" className="w-[14px] h-[14px] mr-4">
          <path d="M4.500 12V1.500h8V11M4.500 3h8" fill="none" stroke="#e0e0e0" strokeWidth="1.800" />
          <circle cx="3" cy="12" r="2.200" fill="#e0e0e0" />
          <circle cx="11" cy="11" r="2.200" fill="#e0e0e0" />
        </svg>
        <svg viewBox="0 0 14 16" className="w-[14px] h-4 mr-[13px]">
          <path d="M4 2.500V1h4v1.500h2.500V8M1.500 2.500h9M1.500 2v13H8" fill="none" stroke="#e0e0e0" strokeWidth="1.600" />
          <path d="M3.500 5h5v4l-2 4h-3z" fill="#e0e0e0" />
          <path d="M11 7l-4 5h3l-2 4 6-5.500h-3L13 7z" fill="#777" />
        </svg>
        <svg viewBox="0 0 12 16" className="w-3 h-4 mr-[9px]">
          <path d="M9 0L.5 9H5l-2 7 8.500-9.500H7z" fill="#fcc21b" />
        </svg>
        <span className="pt-[2px] font-medium text-[14px] whitespace-nowrap">Thursday September 25, 12:21 AM</span>
        <span className="w-[9px] h-10 ml-[5px] bg-[#2b2a30]" />
      </div>
    </footer>
  );
}

export default function App() {
  return (
    <div className="h-screen flex flex-col overflow-hidden bg-[#eeeeee] text-[13px] text-[#1c1c1c] font-[Roboto,'Liberation_Sans',sans-serif]">
      <nav className="flex items-center h-[21px] pl-[2px] border-b border-[#d4d4d4]">
        <Menu items={[["Workspace", 5], ["Control", 0], ["Settings", 0], ["Window", 0], ["Help", 0]]} />
      </nav>
      <TabBar />
      <nav className="flex items-center h-[22px] pl-1 pr-px border-b border-[#d4d4d4]">
        <Menu items={[["File", 0], ["Control", 0], ["View", 0], ["Window", 0]]} />
        <IconButton label="Undock" className="ml-auto w-[22px] h-5"><WindowsIcon /></IconButton>
      </nav>
      <ViewBar />
      <TriggerBar />
      <main className="flex flex-1 min-h-0">
        <ScopeView />
        <div className="w-[6px] shrink-0 bg-[#d0d0d0] border-x border-[#888]" />
        <Measurements />
        <SidePanel />
      </main>
      <StatusBar />
      <Taskbar />
    </div>
  );
}
